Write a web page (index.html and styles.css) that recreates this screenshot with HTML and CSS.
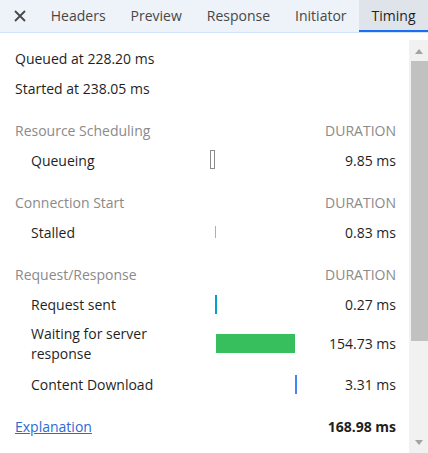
FILE: index.html
```html
<!DOCTYPE html>
<html>
<head>
<meta charset="utf-8">
<link rel="stylesheet" href="styles.css">
</head>
<body>
<div class="tabbar">
  <div class="close">
    <svg width="12" height="12" viewBox="0 0 12 12"><path d="M1 1 L11 11 M11 1 L1 11" stroke="#474747" stroke-width="1.8" fill="none"/></svg>
  </div>
  <div class="tab">Headers</div>
  <div class="tab">Preview</div>
  <div class="tab">Response</div>
  <div class="tab">Initiator</div>
  <div class="tab active">Timing</div>
</div>
<div class="main">
  <div class="content">
    <div class="row"><div class="label">Queued at 228.20 ms</div></div>
    <div class="row"><div class="label">Started at 238.05 ms</div></div>

    <div class="row head"><div class="label">Resource Scheduling</div><div class="bars"></div><div class="dur">DURATION</div></div>
    <div class="row sub"><div class="label">Queueing</div><div class="bars"><div class="bar queue" style="margin-left:0px;width:5px"></div></div><div class="dur">9.85 ms</div></div>

    <div class="row head"><div class="label">Connection Start</div><div class="bars"></div><div class="dur">DURATION</div></div>
    <div class="row sub"><div class="label">Stalled</div><div class="bars"><div class="bar stall" style="margin-left:5px;width:1px"></div></div><div class="dur">0.83 ms</div></div>

    <div class="row head"><div class="label">Request/Response</div><div class="bars"></div><div class="dur">DURATION</div></div>
    <div class="row sub"><div class="label">Request sent</div><div class="bars"><div class="bar sent" style="margin-left:5px;width:2px"></div></div><div class="dur">0.27 ms</div></div>
    <div class="row sub tall"><div class="label">Waiting for server response</div><div class="bars"><div class="bar wait" style="margin-left:6px;width:79px"></div></div><div class="dur">154.73 ms</div></div>
    <div class="row sub"><div class="label">Content Download</div><div class="bars"><div class="bar down" style="margin-left:85px;width:2px"></div></div><div class="dur">3.31 ms</div></div>

    <div class="row foot"><div class="label"><a class="link" href="#">Explanation</a></div><div class="bars"></div><div class="dur total">168.98 ms</div></div>
  </div>
  <div class="scrollbar">
    <div class="arrow up"></div>
    <div class="thumb"></div>
    <div class="spacer"></div>
    <div class="arrow down"></div>
  </div>
</div>
</body>
</html>
```
FILE: styles.css
```css
html, body {
  margin: 0;
  padding: 0;
  background: #ffffff;
  width: 428px;
  height: 453px;
  overflow: hidden;
  font-family: "Open Sans", "Noto Sans", sans-serif;
  font-size: 14px;
  color: #1f1f1f;
}

.tabbar {
  display: flex;
  align-items: stretch;
  height: 32px;
  background: #eef2f9;
  border-bottom: 1px solid #d3e3fd;
}

.close {
  width: 41px;
  display: flex;
  align-items: center;
  justify-content: center;
  padding-left: 1px;
  box-sizing: border-box;
}

.tab {
  padding: 1px 12.5px 0;
  display: flex;
  align-items: center;
  color: #474747;
  box-sizing: border-box;
  border-bottom: 2px solid transparent;
  white-space: nowrap;
}

.tab.active {
  background: #dfe3ea;
  color: #1f1f1f;
  border-bottom-color: #1b6ef3;
  flex: 1;
}

.main {
  display: flex;
  margin-top: 7px;
  height: 413px;
}

.content {
  width: 409px;
  padding: 3px 13px 0 15px;
  box-sizing: border-box;
}

.row {
  display: flex;
  align-items: center;
  height: 30px;
}

.row.head, .row.foot {
  margin-top: 12px;
}

.row.tall {
  height: 50px;
  line-height: 20px;
}

.label {
  width: 195px;
  flex: none;
  white-space: nowrap;
}

.row.sub .label {
  padding-left: 16px;
  width: 150px;
  margin-right: 29px;
  white-space: normal;
}

.head .label, .head .dur {
  color: #8a8a8a;
}

.bars {
  width: 87px;
  flex: none;
  display: flex;
  align-items: center;
}

.bar {
  height: 19px;
  box-sizing: border-box;
  flex: none;
}

.bar.queue {
  border: 1px solid #8c8c8c;
  background: #ffffff;
  margin-top: -1px;
}

.bar.stall {
  height: 12px;
  background: #b0b0b0;
}

.bar.sent {
  background: #00a0c8;
}

.bar.wait {
  background: #37bf5e;
  margin-top: -2px;
}

.bar.down {
  background: #4285f4;
}

.dur {
  flex: 1;
  text-align: right;
  white-space: nowrap;
}

.total {
  font-weight: 700;
}

.link {
  color: #2a6bd4;
  text-decoration: underline;
}

.scrollbar {
  width: 19px;
  background: #f1f1f1;
  display: flex;
  flex-direction: column;
  align-items: stretch;
}

.arrow {
  height: 21px;
  position: relative;
  flex: none;
}

.arrow::after {
  content: "";
  position: absolute;
  left: 6px;
  width: 0;
  height: 0;
  border-left: 4.5px solid transparent;
  border-right: 4.5px solid transparent;
}

.arrow.up::after {
  top: 9px;
  border-bottom: 5px solid #a3a3a3;
}

.arrow.down::after {
  bottom: 8px;
  border-top: 5px solid #a3a3a3;
}

.thumb {
  height: 280px;
  background: #c1c1c1;
  margin-left: 2px;
  flex: none;
}

.spacer {
  flex: 1;
}
```
